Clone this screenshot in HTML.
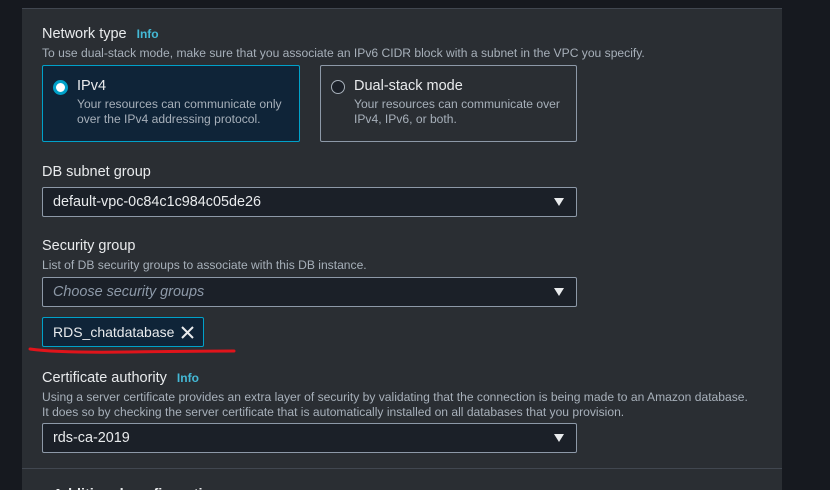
<!DOCTYPE html><html><head><style>
html,body{margin:0;width:830px;height:490px;overflow:hidden}
body{background:#16191f;font-family:"Liberation Sans",sans-serif;position:relative}
.p{position:absolute;left:22px;top:8px;width:760px;height:482px;background:#2a2e33;border-top:1px solid #414750}
.a{position:absolute;white-space:nowrap}
.l{font-size:14.5px;color:#e9ebed}
.d{font-size:12.1px;color:#a7b0ba}
.i{font-size:12px;font-weight:bold;color:#44b9d6;margin-left:10px}
.box{position:absolute;box-sizing:border-box;border:1px solid #8d99a8;border-radius:2px;background:#1b2028}
.sel{font-size:14.4px;color:#e9ebed;padding:0 10px;line-height:30px}
.tri{position:absolute;right:12px;top:10px;width:0;height:0;border-left:5px solid transparent;border-right:5px solid transparent;border-top:8px solid #e9ebed}
</style></head><body>
<div class="p"></div>
<div class="a l" style="left:42px;top:26px">Network type<span class="i">Info</span></div>
<div class="a d" style="left:42px;top:46px">To use dual-stack mode, make sure that you associate an IPv6 CIDR block with a subnet in the VPC you specify.</div>
<div class="box" style="left:42px;top:65px;width:258px;height:77px;background:#0f2438;border-color:#00a1c9"></div>
<div class="a" style="left:53px;top:80px;width:9px;height:9px;border-radius:50%;background:#fff;border:3px solid #00a1c9"></div>
<div class="a l" style="left:77px;top:78px">IPv4</div>
<div class="a d" style="left:77px;top:97px;line-height:15px">Your resources can communicate only<br>over the IPv4 addressing protocol.</div>
<div class="box" style="left:320px;top:65px;width:257px;height:77px;background:#2a2e33"></div>
<div class="a" style="left:331px;top:80px;width:12px;height:12px;border-radius:50%;background:#1b2028;border:1.5px solid #a7b0ba"></div>
<div class="a l" style="left:354px;top:78px">Dual-stack mode</div>
<div class="a d" style="left:354px;top:97px;line-height:15px">Your resources can communicate over<br>IPv4, IPv6, or both.</div>
<div class="a l" style="left:42px;top:164px">DB subnet group</div>
<div class="box sel" style="left:42px;top:187px;width:535px;height:30px;line-height:28px">default-vpc-0c84c1c984c05de26<div class="tri"></div></div>
<div class="a l" style="left:42px;top:238px">Security group</div>
<div class="a d" style="left:42px;top:258px">List of DB security groups to associate with this DB instance.</div>
<div class="box sel" style="left:42px;top:277px;width:535px;height:30px;line-height:28px;color:#8d99a8;font-style:italic">Choose security groups<div class="tri"></div></div>
<div class="box sel" style="left:42px;top:317px;width:162px;height:30px;line-height:28px;background:#0f2438;border-color:#00a1c9;font-size:14px">RDS_chatdatabase<svg style="position:absolute;right:9px;top:8px" width="13" height="13"><path d="M1 1L12 12M12 1L1 12" stroke="#e9ebed" stroke-width="2"/></svg></div>
<svg class="a" style="left:28px;top:346px" width="210" height="10"><path d="M2 3 Q30 7 100 6 T206 5" stroke="#e0141b" stroke-width="3" fill="none" stroke-linecap="round"/></svg>
<div class="a l" style="left:42px;top:370px">Certificate authority<span class="i">Info</span></div>
<div class="a d" style="left:42px;top:390px;line-height:15px">Using a server certificate provides an extra layer of security by validating that the connection is being made to an Amazon database.<br>It does so by checking the server certificate that is automatically installed on all databases that you provision.</div>
<div class="box sel" style="left:42px;top:423px;width:535px;height:30px;line-height:28px">rds-ca-2019<div class="tri"></div></div>
<div class="a" style="left:22px;top:468px;width:760px;height:1px;background:#414750"></div>
<div class="a l" style="left:42px;top:487px;font-weight:bold">▸ Additional configuration</div>
</body></html>
